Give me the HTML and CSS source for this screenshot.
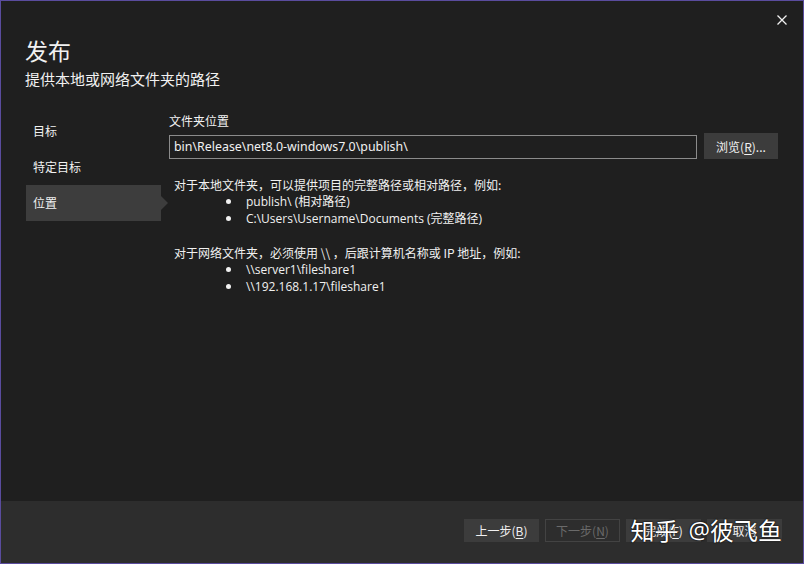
FILE: index.html
```html
<!DOCTYPE html>
<html lang="zh-CN">
<head>
<meta charset="utf-8">
<title>发布</title>
<link rel="stylesheet" href="styles.css">
</head>
<body>
<div class="window">
  <button class="close" aria-label="关闭">
    <svg width="10" height="10" viewBox="0 0 10 10"><path d="M0.5 0.5 L9.5 9.5 M9.5 0.5 L0.5 9.5" stroke="#f1f1f1" stroke-width="1.3" fill="none"/></svg>
  </button>
  <header class="header">
    <h1 class="title">发布</h1>
    <p class="subtitle">提供本地或网络文件夹的路径</p>
  </header>
  <div class="main">
    <nav class="sidebar">
      <div class="nav-item">目标</div>
      <div class="nav-item">特定目标</div>
      <div class="nav-item active">位置</div>
    </nav>
    <section class="content">
      <div class="label">文件夹位置</div>
      <div class="path-row">
        <div class="input">bin\Release\net8.0-windows7.0\publish\</div>
        <button class="btn browse">浏览(<u>R</u>)...</button>
      </div>
      <div class="help">
        <p>对于本地文件夹，可以提供项目的完整路径或相对路径，例如:</p>
        <ul>
          <li>publish\ (相对路径)</li>
          <li>C:\Users\Username\Documents (完整路径)</li>
        </ul>
        <p class="gap">对于网络文件夹，必须使用 \\ ，后跟计算机名称或 IP 地址，例如:</p>
        <ul>
          <li>\\server1\fileshare1</li>
          <li>\\192.168.1.17\fileshare1</li>
        </ul>
      </div>
    </section>
  </div>
  <footer class="footer">
    <button class="btn fbtn">上一步(<u>B</u>)</button>
    <button class="btn fbtn disabled">下一步(<u>N</u>)</button>
    <button class="btn fbtn">完成(<u>F</u>)</button>
    <button class="btn fbtn">取消</button>
    <div class="watermark"><span>知乎</span><span class="at">@</span><span>彼飞鱼</span></div>
  </footer>
</div>
</body>
</html>
```

FILE: styles.css
```css
* { box-sizing: border-box; }
html, body { margin: 0; padding: 0; background: #1f1f1f; }
body {
  font-family: "Segoe UI", "Open Sans", "Noto Sans CJK SC", sans-serif;
  color: #f1f1f1;
}
.window {
  position: relative;
  width: 804px;
  height: 564px;
  border: 1px solid #5a4c9e;
  background: #1f1f1f;
  display: flex;
  flex-direction: column;
}
.close {
  position: absolute;
  top: 13px;
  right: 15px;
  width: 12px;
  height: 12px;
  padding: 1px;
  border: 0;
  background: transparent;
  display: flex;
}
.header {
  padding: 33px 24px 0;
  height: 112px;
}
.title {
  margin: 0;
  font-family: "Noto Sans CJK SC", sans-serif;
  font-weight: 400;
  font-size: 23px;
  line-height: 32px;
}
.subtitle {
  margin: 2px 0 0;
  font-family: "Noto Sans CJK SC", sans-serif;
  font-size: 15px;
  line-height: 22px;
}
.main {
  flex: 1;
  display: flex;
}
.sidebar {
  width: 143px;
  margin-left: 25px;
  display: flex;
  flex-direction: column;
}
.nav-item {
  position: relative;
  width: 135px;
  height: 36px;
  line-height: 36px;
  padding-left: 7px;
  font-family: "Noto Sans CJK SC", sans-serif;
  font-size: 12px;
}
.nav-item.active {
  background: #3d3d3d;
}
.nav-item.active::after {
  content: "";
  position: absolute;
  right: -7px;
  top: 11px;
  border-top: 7px solid transparent;
  border-bottom: 7px solid transparent;
  border-left: 7px solid #3d3d3d;
}
.content {
  flex: 1;
  padding-right: 25px;
}
.label {
  font-family: "Noto Sans CJK SC", sans-serif;
  font-size: 12px;
  line-height: 16px;
}
.path-row {
  display: flex;
  align-items: flex-start;
  gap: 7px;
  margin-top: 4px;
}
.input {
  flex: 1;
  height: 24px;
  margin-top: 2px;
  border: 1px solid #8b8b8b;
  padding: 0 4px;
  font-family: "Noto Sans", "Noto Sans CJK SC", sans-serif;
  font-size: 12.4px;
  line-height: 22px;
  white-space: nowrap;
}
.btn {
  font-family: "Noto Sans CJK SC", sans-serif;
  color: #f1f1f1;
  background: #3c3c3c;
  border: 1px solid #3c3c3c;
  font-size: 12px;
  padding: 0;
}
.btn u { text-underline-offset: 2px; }
.browse {
  width: 74px;
  height: 26px;
}
.help {
  margin-top: 17px;
  padding-left: 5px;
  font-family: "Noto Sans CJK SC", sans-serif;
  font-size: 12px;
  line-height: 17px;
}
.help p { margin: 0; }
.help p.gap { margin-top: 17px; }
.help ul {
  margin: 0;
  padding-left: 72px;
  list-style: none;
  font-family: "Open Sans", "Noto Sans CJK SC", sans-serif;
}
.help li { position: relative; }
.help li::before {
  content: "";
  position: absolute;
  left: -20px;
  top: 6px;
  width: 5px;
  height: 5px;
  border-radius: 50%;
  background: #f1f1f1;
}
.footer {
  position: relative;
  height: 62px;
  background: #2d2d2d;
  display: flex;
  justify-content: flex-end;
  align-items: flex-start;
  gap: 6px;
  padding: 18px 21px 0 0;
}
.fbtn {
  width: 75px;
  height: 23px;
}
.fbtn.disabled {
  background: transparent;
  border-color: #434343;
  color: #6a6a6a;
}
.watermark {
  position: absolute;
  right: 21px;
  top: 13px;
  display: flex;
  font-family: "Noto Sans CJK SC", sans-serif;
  font-size: 24px;
  line-height: 32px;
  color: #ffffff;
  text-shadow: 0 0 2px #000, 0 0 1px #000;
}
.watermark .at {
  margin-left: 10px;
  font-family: "Open Sans", sans-serif;
}
```
